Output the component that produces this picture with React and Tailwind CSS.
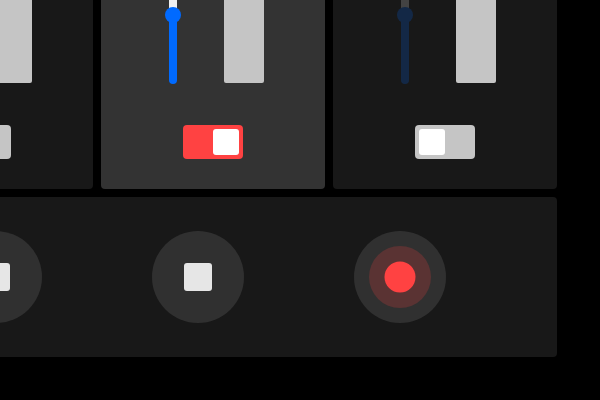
const channels = [
  { name: 'Channel 1', level: 50, on: false, active: false },
  { name: 'Channel 2', level: 50, on: false, active: false },
  { name: 'Channel 3', level: 50, on: true, active: true },
  { name: 'Channel 4', level: 50, on: false, active: false },
];

function Fader({ label, level, muted }) {
  return (
    <input
      type="range"
      aria-label={label}
      defaultValue={level}
      className={`h-[138px] w-4 appearance-none bg-transparent [direction:rtl] [writing-mode:vertical-lr] [&::-webkit-slider-runnable-track]:h-full [&::-webkit-slider-runnable-track]:w-2 [&::-webkit-slider-runnable-track]:rounded-full [&::-webkit-slider-runnable-track]:bg-[linear-gradient(to_top,#006aff_50%,#f0f0f0_50%)] [&::-webkit-slider-thumb]:-ml-1 [&::-webkit-slider-thumb]:size-4 [&::-webkit-slider-thumb]:appearance-none [&::-webkit-slider-thumb]:rounded-full [&::-webkit-slider-thumb]:bg-[#006aff] ${muted ? 'opacity-20' : ''}`}
    />
  );
}

function Toggle({ label, on }) {
  return (
    <input
      type="checkbox"
      role="switch"
      aria-label={label}
      defaultChecked={on}
      className="flex h-[34px] w-[60px] appearance-none rounded bg-[#c5c5c5] p-1 before:size-[26px] before:rounded-[3px] before:bg-white before:content-[''] checked:justify-end checked:bg-[#ff4242]"
    />
  );
}

function Channel({ name, level, on, active }) {
  return (
    <section
      aria-label={name}
      className={`flex flex-col items-center gap-[41px] rounded pt-10 pb-[30px] ${active ? 'bg-[#333333]' : 'bg-[#181818]'}`}
    >
      <div className="flex w-full items-center gap-[43px] pl-16">
        <Fader label={`${name} volume`} level={level} muted={!on} />
        <div role="meter" aria-label={`${name} level`} aria-valuenow={0} className="h-[136px] w-10 rounded-xs bg-[#c5c5c5]" />
      </div>
      <Toggle label={`${name} enabled`} on={on} />
    </section>
  );
}

function RoundButton({ label, children }) {
  return (
    <button type="button" aria-label={label} className="flex size-[92px] items-center justify-center rounded-full bg-[#303030]">
      {children}
    </button>
  );
}

function StopIcon() {
  return <span className="size-7 rounded-[3px] bg-[#e6e6e6]" />;
}

function RecordIcon() {
  return (
    <svg viewBox="0 0 62 62" className="size-[62px]" aria-hidden="true">
      <circle cx="31" cy="31" r="31" fill="#5a3333" />
      <circle cx="31" cy="31" r="15.5" fill="#ff4242" />
    </svg>
  );
}

export default function App() {
  return (
    <main className="flex h-screen flex-col items-end justify-end overflow-hidden bg-black pr-[43px] pb-[43px]">
      <div className="flex w-max flex-col gap-2">
        <div className="grid grid-cols-[repeat(4,224px)] gap-2">
          {channels.map((channel) => (
            <Channel key={channel.name} {...channel} />
          ))}
        </div>
        <div className="flex justify-center gap-[110px] rounded bg-[#181818] py-[34px]">
          <RoundButton label="Stop 1"><StopIcon /></RoundButton>
          <RoundButton label="Stop 2"><StopIcon /></RoundButton>
          <RoundButton label="Stop 3"><StopIcon /></RoundButton>
          <RoundButton label="Record"><RecordIcon /></RoundButton>
        </div>
      </div>
    </main>
  );
}
